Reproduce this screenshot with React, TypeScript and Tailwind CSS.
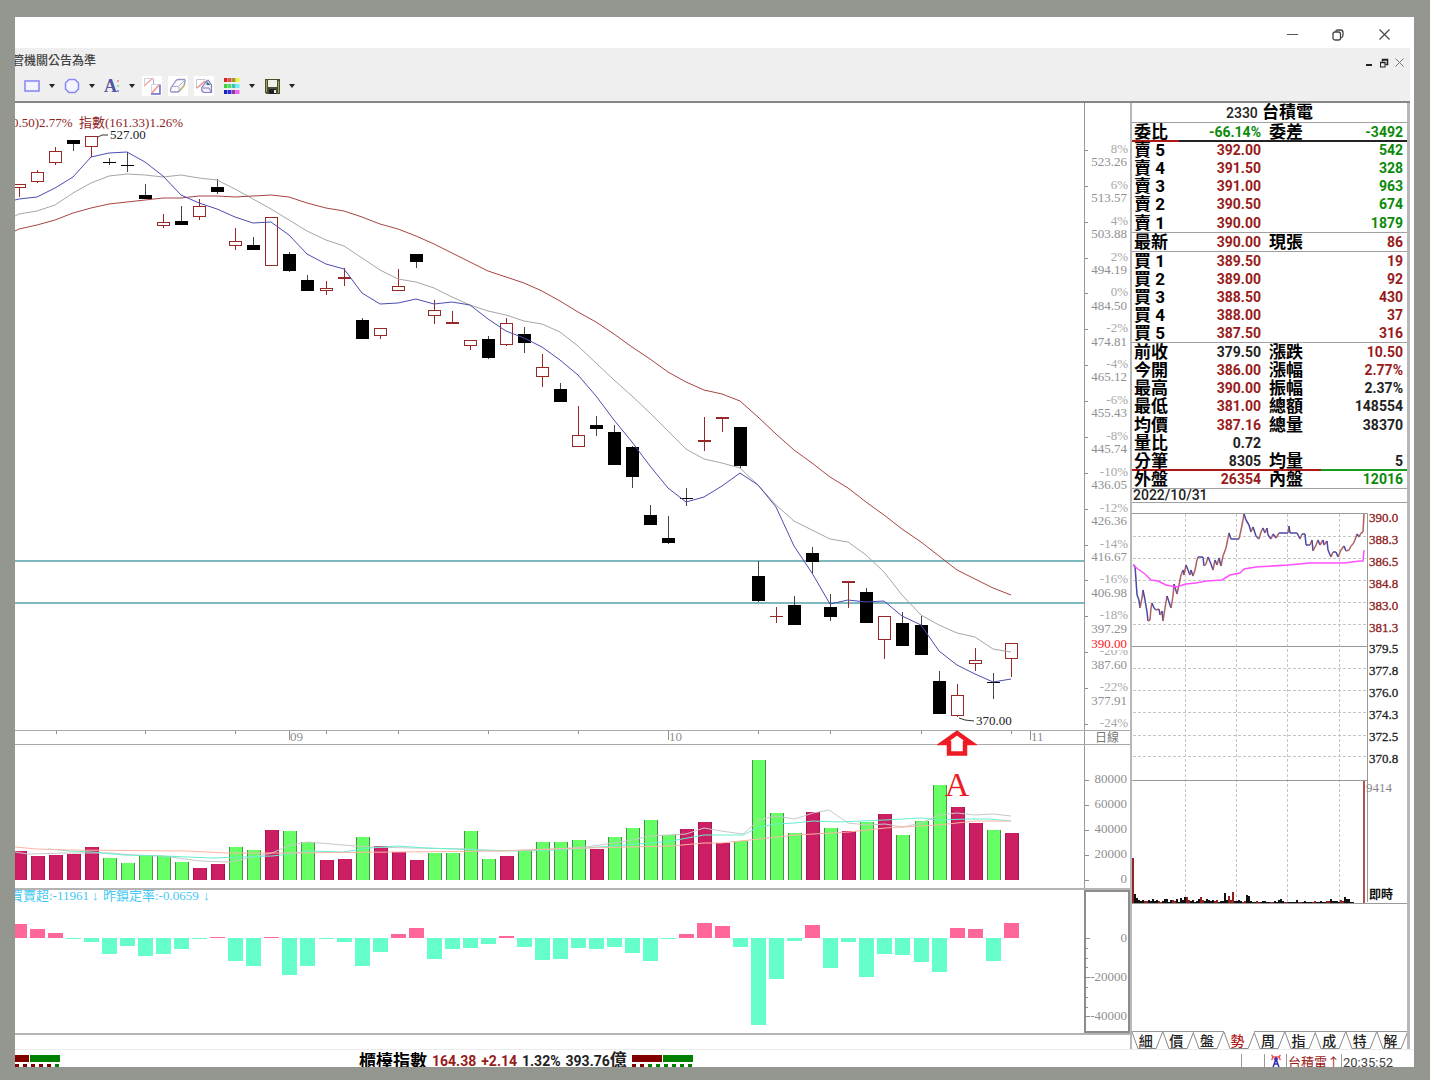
import React from 'react'

type Candle = ['r' | 'k', number, number, number, number]

// [colour, high, body top, body bottom, low]
const candles: Candle[] = [
  ['r', 184, 184, 187, 197],
  ['r', 170, 172, 181, 183],
  ['r', 147, 151, 162, 165],
  ['k', 140, 140, 143, 151],
  ['r', 136, 136, 146, 157],
  ['k', 158, 162, 162, 165],
  ['k', 152, 165, 165, 172],
  ['k', 184, 195, 198, 198],
  ['r', 214, 222, 225, 228],
  ['k', 206, 221, 224, 224],
  ['r', 199, 206, 216, 220],
  ['k', 179, 187, 191, 194],
  ['r', 228, 241, 245, 250],
  ['k', 237, 245, 249, 249],
  ['r', 217, 217, 265, 265],
  ['k', 252, 254, 270, 272],
  ['k', 275, 280, 290, 290],
  ['r', 281, 288, 290, 295],
  ['r', 268, 277, 278, 286],
  ['k', 318, 320, 338, 339],
  ['r', 328, 328, 335, 339],
  ['r', 269, 286, 290, 290],
  ['k', 254, 254, 261, 268],
  ['r', 300, 310, 315, 324],
  ['r', 311, 322, 323, 323],
  ['r', 340, 340, 345, 350],
  ['k', 336, 339, 357, 359],
  ['r', 318, 323, 344, 346],
  ['k', 327, 334, 342, 353],
  ['r', 354, 367, 376, 387],
  ['k', 383, 389, 401, 401],
  ['r', 406, 435, 446, 446],
  ['k', 416, 425, 428, 436],
  ['k', 425, 432, 464, 465],
  ['k', 446, 447, 476, 488],
  ['k', 505, 515, 524, 524],
  ['k', 516, 538, 542, 544],
  ['k', 488, 498, 498, 506],
  ['r', 417, 440, 441, 451],
  ['r', 417, 417, 418, 432],
  ['k', 427, 427, 465, 468],
  ['k', 561, 576, 600, 602],
  ['r', 607, 616, 616, 623],
  ['k', 596, 605, 624, 624],
  ['k', 547, 553, 561, 573],
  ['k', 594, 607, 616, 621],
  ['r', 581, 581, 582, 608],
  ['k', 588, 592, 622, 622],
  ['r', 616, 616, 639, 659],
  ['k', 612, 623, 645, 645],
  ['k', 616, 625, 654, 654],
  ['k', 671, 681, 713, 713],
  ['r', 684, 695, 715, 717],
  ['r', 648, 660, 663, 671],
  ['k', 673, 682, 682, 699],
  ['r', 643, 643, 658, 677],
]

const ma5 = [
  199, 197, 188, 177, 157, 153, 152, 162, 176, 195, 203, 209, 217, 223, 222, 235, 254, 264, 269,
  293, 304, 303, 299, 304, 302, 305, 319, 331, 338, 347, 360, 375, 396, 420, 442, 466, 488, 502,
  497, 486, 473, 485, 507, 546, 573, 604, 600, 602, 601, 616, 625, 651, 665, 674, 682, 679,
]
const ma10 = [
  214, 211, 205, 193, 183, 176, 174, 175, 177, 175, 178, 180, 189, 199, 209, 220, 231, 240, 246,
  258, 270, 279, 282, 288, 297, 305, 311, 315, 321, 324, 332, 346, 363, 380, 396, 413, 431, 449,
  459, 463, 468, 485, 505, 521, 530, 539, 542, 555, 572, 595, 615, 625, 633, 637, 649, 652,
]
const ma20 = [
  229, 225, 220, 213, 208, 204, 202, 200, 198, 198, 196, 196, 197, 196, 195, 197, 203, 208, 211,
  217, 224, 229, 236, 244, 253, 262, 271, 277, 283, 291, 301, 312, 322, 334, 347, 359, 372, 382,
  390, 394, 401, 417, 434, 450, 463, 477, 488, 502, 515, 529, 542, 556, 570, 579, 588, 595,
]

const volumes =
  'r851 r856 r855 r854 r847 g858 g863 g855 g856 g862 r868 r864 g847 g850 r830 g831 g842 r860 r859 g837 r846 r852 r860 g853 g853 g831 g859 r856 g851 g842 g842 g840 r849 g837 g828 g820 g835 r829 r822 r843 g841 g760 g813 g833 r812 g828 r831 g822 r814 g835 g821 g785 r807 r823 g830 r833'
    .split(' ')
    .map((v) => ({ color: v[0] === 'r' ? '#cc1f63' : '#66ff66', top: +v.slice(1) }))

// net buy / sell, in pixels from the zero line
const flows = [
  14, 9, 5, -1, -4, -16, -8, -18, -16, -11, -1, 1, -23, -28, 1, -37, -28, -1, -4, -28, -14, 4, 10,
  -21, -11, -10, -6, 2, -9, -22, -21, -10, -11, -9, -15, -23, -1, 4, 15, 12, -9, -87, -41, -3, 13,
  -30, -4, -39, -16, -17, -24, -34, 10, 9, -23, 15,
]

const volumeLines = [
  {
    color: '#c8c8c8',
    points:
      '15,852 28,854 67,853 110,853 133,855 163,856 200,861 230,862 253,857 272,853 290,845 308,842 343,845 370,847 413,848 467,849 500,851 554,849 586,847 607,844 632,840 650,836 686,834 704,828 721,831 743,834 759,820 776,816 795,819 813,813 829,810 848,823 867,825 885,824 903,827 921,823 939,815 957,813 975,815 993,814 1011,816',
  },
  {
    color: '#66f0d0',
    points:
      '48,849 60,850 70,851 93,852 123,855 163,856 213,858 240,857 272,856 290,854 308,851 343,852 370,848 397,846 427,848 480,850 518,851 554,850 586,848 625,845 650,843 671,841 704,835 743,835 759,827 776,824 795,823 813,821 839,822 885,820 921,818 939,820 968,819 989,819 1011,821',
  },
  {
    color: '#ffb4a4',
    points:
      '15,847 37,849 67,850 187,851 227,853 283,853 397,852 500,851 554,849 586,848 671,846 704,843 721,843 750,840 795,835 849,832 885,828 939,825 975,821 1011,821',
  },
]

const intraday = [
  [1133, 565], [1135, 566], [1136, 580], [1137, 595], [1139, 600], [1140, 608], [1142, 598],
  [1143, 590], [1145, 600], [1147, 612], [1148, 621], [1150, 620], [1151, 608], [1152, 603],
  [1154, 608], [1156, 610], [1159, 609], [1160, 615], [1162, 611], [1163, 621], [1165, 608],
  [1167, 596], [1169, 602], [1171, 608], [1173, 596], [1174, 584], [1177, 594], [1179, 585],
  [1181, 575], [1183, 570], [1184, 575], [1186, 565], [1188, 570], [1190, 575], [1191, 570],
  [1193, 576], [1195, 570], [1197, 560], [1198, 557], [1203, 557], [1204, 566], [1206, 564],
  [1208, 557], [1211, 564], [1213, 570], [1215, 560], [1217, 565], [1219, 558], [1221, 566],
  [1223, 556], [1226, 548], [1228, 538], [1229, 533], [1231, 539], [1239, 539], [1241, 530],
  [1243, 520], [1244, 514], [1246, 520], [1249, 525], [1251, 532], [1253, 527], [1256, 536],
  [1259, 539], [1261, 532], [1263, 528], [1265, 533], [1267, 528], [1268, 535], [1271, 539],
  [1273, 534], [1276, 538], [1279, 533], [1288, 533], [1289, 526], [1290, 533], [1297, 533],
  [1300, 539], [1302, 534], [1305, 534], [1306, 545], [1310, 545], [1312, 540], [1313, 551],
  [1316, 545], [1318, 540], [1320, 545], [1323, 540], [1324, 545], [1327, 541], [1328, 550],
  [1331, 557], [1333, 552], [1336, 552], [1338, 557], [1341, 550], [1344, 546], [1346, 551],
  [1349, 550], [1351, 546], [1353, 544], [1355, 540], [1357, 534], [1359, 537], [1361, 533],
  [1363, 532], [1364, 514],
]
const intradayAvg =
  '1133,565 1138,569 1145,574 1151,580 1158,581 1166,585 1176,587 1186,584 1196,583 1206,581 1222,580 1230,575 1240,573 1244,569 1256,567 1288,565 1310,563 1344,563 1360,561 1363,561 1364,550'
const ticks =
  '9 5 3 2 3 2 2 3 2 4 2 3 2 1 2 4 4 1 3 3 2 4 1 5 3 6 6 3 2 3 1 2 4 6 3 2 4 3 2 3 2 3 1 2 2 10 3 7 3 11 2 2 3 2 1 2 8 7 2 1 1 2 1 1 2 2 1 1 1 1 2 1 3 4 2 1 1 1 1 1 1 3 1 1 1 2 1 1 1 1 2 1 1 2 1 1 2 2 4 2 2 2 1 3 2 6 4 4 1 1'
    .split(' ')
    .map(Number)

const rightLabels = ['390.0', '388.3', '386.5', '384.8', '383.0', '381.3', '379.5', '377.8', '376.0', '374.3', '372.5', '370.8']
const priceLabels = ['523.26', '513.57', '503.88', '494.19', '484.50', '474.81', '465.12', '455.43', '445.74', '436.05', '426.36', '416.67', '406.98', '397.29', '387.60', '377.91']

const RED = 'text-[#981b1b]'
const GREEN = 'text-[#0b8a0b]'
const BLACK = 'text-[#222222]'

interface IRow {
  label: string
  value: string
  color: string
  label2?: string
  value2: string
  color2: string
  rule?: boolean
  split?: number
}
const rows: IRow[] = [
  { label: '委比', value: '-66.14%', color: GREEN, label2: '委差', value2: '-3492', color2: GREEN, split: 17 },
  { label: '賣 5', value: '392.00', color: RED, value2: '542', color2: GREEN },
  { label: '賣 4', value: '391.50', color: RED, value2: '328', color2: GREEN },
  { label: '賣 3', value: '391.00', color: RED, value2: '963', color2: GREEN },
  { label: '賣 2', value: '390.50', color: RED, value2: '674', color2: GREEN },
  { label: '賣 1', value: '390.00', color: RED, value2: '1879', color2: GREEN, rule: true },
  { label: '最新', value: '390.00', color: RED, label2: '現張', value2: '86', color2: RED, rule: true },
  { label: '買 1', value: '389.50', color: RED, value2: '19', color2: RED },
  { label: '買 2', value: '389.00', color: RED, value2: '92', color2: RED },
  { label: '買 3', value: '388.50', color: RED, value2: '430', color2: RED },
  { label: '買 4', value: '388.00', color: RED, value2: '37', color2: RED },
  { label: '買 5', value: '387.50', color: RED, value2: '316', color2: RED, rule: true },
  { label: '前收', value: '379.50', color: BLACK, label2: '漲跌', value2: '10.50', color2: RED },
  { label: '今開', value: '386.00', color: RED, label2: '漲幅', value2: '2.77%', color2: RED },
  { label: '最高', value: '390.00', color: RED, label2: '振幅', value2: '2.37%', color2: BLACK },
  { label: '最低', value: '381.00', color: RED, label2: '總額', value2: '148554', color2: BLACK },
  { label: '均價', value: '387.16', color: RED, label2: '總量', value2: '38370', color2: BLACK },
  { label: '量比', value: '0.72', color: BLACK, value2: '', color2: BLACK },
  { label: '分筆', value: '8305', color: BLACK, label2: '均量', value2: '5', color2: BLACK, split: 68.7 },
  { label: '外盤', value: '26354', color: RED, label2: '內盤', value2: '12016', color2: GREEN, rule: true },
]

const cx = (i: number) => Math.round(19 + 18.03 * i)
const toPoints = (ys: number[]) => ys.map((y, i) => `${cx(i)},${y}`).join(' ')

function Caret({ label }: { label: string }) {
  return (
    <button aria-label={label} className="flex h-5 w-5 items-center justify-center">
      <svg width="6" height="4" viewBox="0 0 6 4">
        <path d="M0 0h6L3 4z" fill="#222" />
      </svg>
    </button>
  )
}

function Toolbar() {
  const btn = 'flex h-5 w-5 items-center justify-center'
  return (
    <div className="flex h-[30px] items-center pl-[7px]">
      <button aria-label="矩形" className={btn}>
        <svg width="16" height="12">
          <rect x="1" y="1" width="14" height="10" fill="#f4f4ff" stroke="#8484f4" strokeWidth="1.500" />
        </svg>
      </button>
      <Caret label="矩形選項" />
      <button aria-label="圓形" className={btn}>
        <svg width="16" height="16">
          <path d="M5 1.500h6L14.500 5v6L11 14.500H5L1.500 11V5z" fill="#f4f4ff" stroke="#8888f4" strokeWidth="1.500" strokeLinejoin="round" />
        </svg>
      </button>
      <Caret label="圓形選項" />
      <button aria-label="文字" className={btn}>
        <span className="font-['Liberation_Serif',serif] text-lg leading-none font-bold text-[#5058a0]">A</span>
        <svg width="3" height="14">
          <rect y="1" width="2" height="2" fill="#e8a0a0" />
          <rect y="6" width="2" height="2" fill="#a0d8a0" />
          <rect y="11" width="2" height="2" fill="#9090e0" />
        </svg>
      </button>
      <Caret label="文字選項" />
      <div className="flex gap-1.5">
        <button aria-label="複製線" className={`${btn} bg-white`}>
          <svg width="20" height="20" fill="none">
            <path d="M2.500 9V2.500H10" stroke="#d0d0dc" />
            <path d="M2 10l9-8" stroke="#f4a8a8" strokeWidth="1.500" />
            <path d="M9.500 8.500h8v9h-8z" fill="#fff" stroke="#d8d0e4" />
            <path d="M18 8.500v9.500H9" stroke="#6c6cc8" strokeWidth="1.500" />
            <path d="M10 17l7-8" stroke="#f09090" strokeWidth="1.500" />
            <path d="M11.500 3v5" stroke="#a8a8dc" />
          </svg>
        </button>
        <button aria-label="橡皮擦" className={`${btn} bg-white`}>
          <svg width="20" height="20" fill="none">
            <path d="M8 4.500q1-1 3-1h5q1.500 0 1 2l-1 4-4.500 5.500q-1 1-3 1H4q-1.500 0-1.500-1.500t1-3.500z" fill="#fbfbff" stroke="#9494c4" strokeWidth="1.300" strokeLinejoin="round" />
            <path d="M4 10.500h5.500q1.500 0 1.500 1.500v3.500M10.500 10.500l6-6" stroke="#a8a8d0" />
            <path d="M12 14.500l5-6" stroke="#c8c060" strokeWidth="1.500" />
          </svg>
        </button>
        <button aria-label="全部清除" className={`${btn} bg-white`}>
          <svg width="20" height="20" fill="none">
            <path d="M2.500 12.500v-9h9" stroke="#c4c4d4" />
            <path d="M3 12l8-7" stroke="#f09090" strokeWidth="1.500" />
            <path d="M8 11.500l4-6 2-1.500 3.500 5v7.500h-8l-2-2z" fill="#eeeefc" stroke="#8080b8" strokeWidth="1.200" />
            <path d="M12.500 5l4 4h-4z" fill="#407080" />
            <path d="M9 12h6l2 4" stroke="#8080b8" />
          </svg>
        </button>
      </div>
      <button aria-label="顏色" className={`${btn} ml-2`}>
        <svg width="16" height="17">
          {['#e02020 #e05050 #90a020 #f0f040', '#40d040 #50e070 #40c0c0 #70f0f0', '#2020c0 #3030e0 #a030a0 #f060f0'].map((row, r) =>
            row.split(' ').map((c, i) => <rect key={c} x={i * 4} y={r * 6} width="3.500" height="4" fill={c} />),
          )}
        </svg>
      </button>
      <Caret label="顏色選項" />
      <button aria-label="儲存" className={btn}>
        <svg width="15" height="15">
          <path d="M0 0h15v15H1.500L0 13.500z" fill="#4c4c30" />
          <rect x="3" y="1" width="9" height="7" fill="#f0f0ea" />
          <rect x="1" y="1" width="1" height="12" fill="#a0a060" />
          <rect x="13" y="2" width="1" height="12" fill="#a0a060" />
          <rect x="4" y="10" width="7" height="5" fill="#222" />
          <rect x="9" y="11" width="2" height="3" fill="#e8e8e8" />
        </svg>
      </button>
      <Caret label="儲存選項" />
    </div>
  )
}

function PricePanel() {
  return (
    <div className="flex h-[628px] border-b border-[#a8a8a8]">
      <svg className="h-full min-w-0 flex-1 font-['Liberation_Serif','Noto_Sans_CJK_TC',serif] text-[13px]">
        <g transform="translate(-15 -103)">
          {[560, 602].map((y) => (
            <rect key={y} x="15" y={y} width="100%" height="2" fill="#7fb8bf" />
          ))}
          {candles.map(([c, high, top, bottom, low], i) => {
            const color = c === 'r' ? '#982828' : '#000'
            const x = cx(i)
            return (
              <g key={i} shapeRendering="crispEdges">
                <rect x={x} y={high} width="1" height={low - high} fill={c === 'r' ? color : '#444'} />
                {c === 'r' && bottom - top > 1 ? (
                  <rect x={x - 5.5} y={top + 0.5} width="12" height={bottom - top} fill="#fff" stroke={color} />
                ) : (
                  <rect x={x - 6} y={top} width="13" height={bottom - top + 1} fill={color} />
                )}
              </g>
            )
          })}
          <g fill="none" strokeWidth="1">
            <polyline points={`15,216 ${toPoints(ma10)}`} stroke="#a6a6a6" />
            <polyline points={`15,231 ${toPoints(ma20)}`} stroke="#a84444" />
            <polyline points={`15,200 ${toPoints(ma5)}`} stroke="#4c4cb0" />
            <path d="M98 137l4-2h6M959 718l6 2 9 1" stroke="#333" />
          </g>
          <text x="12" y="127" fill="#8e2424">0.50)2.77%</text>
          <text x="79" y="127" fill="#8e2424">指數(161.33)1.26%</text>
          <text x="110" y="139" fill="#222">527.00</text>
          <text x="976" y="725" fill="#222">370.00</text>
        </g>
      </svg>
      <svg className="h-full w-[46px] border-l border-[#999] font-['Liberation_Serif',serif] text-[13px]" textAnchor="end" fill="#8f8f8f">
        <g transform="translate(-1086 -103)">
          {Array.from({ length: 17 }, (_, i) => {
            const y = Math.round(150 + 35.87 * i)
            return (
              <g key={i}>
                <rect x="1086" y={y} width="3" height="1" />
                <text x="1129" y={y + 3} fill="#a8a8a8">{`${8 - 2 * i}%`}</text>
              </g>
            )
          })}
          {priceLabels.map((p, i) => (
            <text key={p} x="1128" y={Math.round(166 + 35.9 * i)}>{p}</text>
          ))}
          <rect x="1089" y="638" width="40" height="12" fill="#fff" />
          <text x="1128" y="648" fill="#ff2020">390.00</text>
        </g>
      </svg>
    </div>
  )
}

function TimeAxis() {
  return (
    <div className="flex h-[14px] border-b border-[#a8a8a8]">
      <svg className="h-full min-w-0 flex-1 overflow-visible font-['Liberation_Serif',serif] text-[13px]" fill="#8f8f8f">
        {[41, 130, 220, 311, 383, 473, 563, 743, 815, 906, 996].map((x) => (
          <rect key={x} x={x} width="1" height="3" />
        ))}
        {[['09', 274], ['10', 653], ['11', 1015]].map(([t, x]) => (
          <g key={t}>
            <rect x={x} width="1" height="9" />
            <text x={+x + 1} y="10">{t}</text>
          </g>
        ))}
      </svg>
      <div className="w-[46px] border-l border-[#999] pl-2.5 font-['Noto_Sans_CJK_TC',sans-serif] text-xs leading-[11px] text-[#777]">
        日線
      </div>
    </div>
  )
}

function VolumePanel() {
  return (
    <div className="flex h-[145px] border-b-2 border-[#b4b4b4]">
      <svg className="h-full min-w-0 flex-1">
        <g transform="translate(-15 -745)">
          {volumes.map((v, i) => (
            <g key={i} shapeRendering="crispEdges">
              <rect x={cx(i) - 6} y={v.top} width="14" height={880 - v.top} fill={v.color === '#66ff66' ? '#4f8a4f' : '#a3164e'} />
              <rect x={cx(i) - 5} y={v.top} width="12" height={880 - v.top} fill={v.color} />
            </g>
          ))}
          {volumeLines.map((l) => (
            <polyline key={l.color} points={l.points} fill="none" stroke={l.color} />
          ))}
        </g>
      </svg>
      <svg className="h-full w-[46px] border-l border-[#999] font-['Liberation_Serif',serif] text-[13px]" textAnchor="end" fill="#8f8f8f">
        {[80000, 60000, 40000, 20000, 0].map((n, i) => (
          <g key={n}>
            <rect y={35 + 25 * i} width="4" height="1" />
            <text x="42" y={38 + 25 * i}>{n}</text>
          </g>
        ))}
      </svg>
    </div>
  )
}

function FlowPanel() {
  return (
    <div className="flex h-[145px] border-b-2 border-[#b4b4b4]">
      <svg className="h-full min-w-0 flex-1 overflow-visible font-['Liberation_Serif','Noto_Sans_CJK_TC',serif] text-[13px]" fill="#45c8f5">
        <text x="-5" y="10">買賣超:-11961</text>
        <text x="77" y="10">↓</text>
        <text x="88" y="10">昨鎖定率:-0.0659</text>
        <text x="188" y="10">↓</text>
        {flows.map((f, i) => (
          <rect
            key={i}
            x={cx(i) - 22}
            y={f > 0 ? 48 - f : 48}
            width="15"
            height={Math.abs(f)}
            fill={f > 0 ? '#ff6699' : '#66ffcc'}
            shapeRendering="crispEdges"
          />
        ))}
      </svg>
      <svg className="h-full w-[46px] border-2 border-[#8c8c8c] font-['Liberation_Serif',serif] text-[13px]" textAnchor="end" fill="#8f8f8f">
        {[0, 1, 2, 3, 4, 5, 6, 7, 8].map((i) => (
          <rect key={i} y={Math.round(46 + 9.8 * i)} width={i % 4 === 0 ? 4 : 2} height="1" />
        ))}
        <text x="41" y="50">0</text>
        <text x="41" y="89">-20000</text>
        <text x="41" y="128">-40000</text>
      </svg>
    </div>
  )
}

function QuoteTable() {
  return (
    <table className="h-[366px] w-full table-fixed border-collapse font-['Roboto','Noto_Sans_CJK_TC',sans-serif] text-sm leading-[18px] font-bold">
      <tbody>
        {rows.map((r) => (
          <tr key={r.label} className={`relative ${r.rule ? 'border-b border-[#a0a0a0]' : ''}`}>
            <th className="w-[51px] p-0 pl-0.5 text-left text-[17px] leading-4 font-bold whitespace-pre text-black">
              {r.label}
            </th>
            <td className={`w-[78px] p-0 text-right ${r.color}`}>{r.value}</td>
            <th className="w-[57px] p-0 pl-2 text-left text-[17px] leading-4 font-bold text-black">{r.label2}</th>
            <td className={`p-0 pr-1 text-right ${r.color2}`}>
              {r.value2}
              {r.split && (
                <div className="absolute inset-x-0 -bottom-px flex h-0.5">
                  <div className="bg-[#b01818]" style={{ width: `${r.split}%` }} />
                  <div className={r.split < 50 ? 'flex-1 bg-[#222]' : 'flex-1 bg-[#1a9a1a]'} />
                </div>
              )}
            </td>
          </tr>
        ))}
      </tbody>
    </table>
  )
}

function Intraday() {
  return (
    <svg className="h-[401px] w-full border-b border-[#999] font-['Liberation_Serif','Noto_Sans_CJK_TC',serif] text-[13px]">
      <g transform="translate(-1132 -503)">
        <g stroke="#c4c4c4" strokeDasharray="3 2">
          {[536, 558, 580, 602, 624, 668, 690, 712, 735, 756].map((y) => (
            <path key={y} d={`M1133 ${y}.5H1367`} />
          ))}
          {[1185, 1236, 1287, 1339].map((x) => (
            <path key={x} d={`M${x}.5 514V902`} />
          ))}
        </g>
        <path d="M1132 513.500H1367.500V902M1132 646.500H1367M1132 780.500H1367" fill="none" stroke="#999" />
        {intraday.slice(1).map(([x, y], i) => {
          const [px, py] = intraday[i]
          return (
            <line key={i} x1={px} y1={py} x2={x} y2={y} stroke={y < py ? '#b06060' : '#4848a8'} strokeWidth="1.500" />
          )
        })}
        <polyline points={intradayAvg} fill="none" stroke="#ff50ff" strokeWidth="1.500" />
        <rect x="1132" y="858" width="2" height="45" fill="#902828" />
        <rect x="1363" y="781" width="2" height="122" fill="#b05050" />
        {ticks.map((t, i) => (
          <rect key={i} x={1134 + i * 2} y={903 - t} width="2" height={t} fill={i % 7 > 4 || t > 10 ? '#902020' : '#111'} />
        ))}
        {rightLabels.map((l, i) => (
          <text key={l} x="1369" y={Math.round(522 + 21.9 * i)} fill={i < 6 ? '#8e2020' : '#222'} stroke={i < 6 ? '#8e2020' : '#222'} strokeWidth="0.300">
            {l}
          </text>
        ))}
        <text x="1366" y="792" fill="#888">9414</text>
        <text x="1369" y="899" fill="#111" className="text-xs font-bold">即時</text>
      </g>
    </svg>
  )
}

function Tabs() {
  return (
    <div className="flex h-[18px] font-['Noto_Sans_CJK_TC',sans-serif] text-sm leading-[15px] text-[#222]">
      {['細', '價', '盤', '勢', '周', '指', '成', '特', '解'].map((t) => (
        <button
          key={t}
          className={`relative flex-1 border-t pr-[3px] font-medium ${t === '勢' ? 'border-transparent text-[#b01c1c]' : 'border-[#999]'}`}
        >
          <svg className="absolute inset-0 h-full w-full" viewBox="0 0 31 17" preserveAspectRatio="none" fill="none">
            <path d="M0 0l6 16.500h18.500L31 0" stroke="#888" />
          </svg>
          {t}
        </button>
      ))}
    </div>
  )
}

function Meter({ red, total }: { red: number; total: number }) {
  return (
    <svg width="61" height="13" className="shrink-0">
      <rect width="30" height="7" fill="#800000" />
      <rect x="31" width="30" height="7" fill="#008000" />
      {Array.from({ length: total }, (_, i) => (
        <rect key={i} x={i * 8} y="9" width="4" height="4" fill={i < red ? '#800000' : '#008000'} />
      ))}
    </svg>
  )
}

function StatusBar() {
  return (
    <div className="flex h-[18px] overflow-hidden border-t border-[#ececec] font-['Roboto','Noto_Sans_CJK_TC',sans-serif] text-sm leading-[22px] font-bold">
      <div className="-ml-4 w-[360px] shrink-0 pt-[5px]">
        <Meter red={7} total={8} />
      </div>
      <div className="flex flex-1 gap-[5px] whitespace-nowrap text-[#222]">
        <span className="text-[17px] text-black">櫃檯指數</span>
        <span className={RED}>164.38</span>
        <span className={RED}>+2.14</span>
        <span>1.32%</span>
        <span>
          393.76<span className="text-[17px] leading-none">億</span>
        </span>
        <div className="pt-[5px]">
          <Meter red={2} total={8} />
        </div>
      </div>
      <div className="flex pt-1 leading-[18px] font-normal">
        <div className="w-[23px] border-l border-[#999]" />
        <div className="flex w-[22px] justify-center border-l border-[#999]">
          <svg width="12" height="14" fill="none">
            <path d="M1.500 1q2.500 2 0 5M10.500 1q-2.500 2 0 5M3 3h6" stroke="#f05050" strokeWidth="1.500" />
            <path d="M6 3v5M4 5h4M5.500 6L3 13.500M6.500 6L9 13.500M4 10h4" stroke="#3030b0" strokeWidth="1.500" />
          </svg>
        </div>
        <div className={`w-[55px] border-l border-[#999] pl-px text-[13px] ${RED}`}>台積電↑</div>
        <div className="w-[73px] border-l border-[#999] pl-px text-[13px] text-[#444]">20:35:52</div>
      </div>
    </div>
  )
}

function App() {
  return (
    <div className="flex min-h-screen flex-col bg-[#949690] pt-[17px] pr-4 pb-[13px] pl-[15px]">
      <div className="flex flex-1 flex-col overflow-hidden bg-white">
        <div className="flex h-[31px] items-center justify-end pt-1 pr-[7px]">
          <button aria-label="最小化" className="flex w-[46px] justify-center">
            <svg width="11" height="11"><path d="M0 5.500h11" stroke="#555" /></svg>
          </button>
          <button aria-label="還原" className="flex w-[46px] justify-center">
            <svg width="12" height="12" fill="none" stroke="#444" strokeWidth="1.300">
              <rect x="1" y="3" width="7.500" height="8" rx="2" />
              <path d="M3.500 2.500C4 1 5 1 6 1h2.500C10.500 1 11 2 11 3.500V6c0 1.500-.5 2.500-2 3" />
            </svg>
          </button>
          <button aria-label="關閉" className="flex w-[46px] justify-center">
            <svg width="11" height="11"><path d="M.5.5l10 10M10.500.5l-10 10" stroke="#444" strokeWidth="1.200" /></svg>
          </button>
        </div>
        <div className="mr-1 h-[53px] bg-[#efefef]">
          <div className="flex h-[23px] items-center justify-between pr-1.5">
            <span className="-ml-[3px] font-['Noto_Sans_CJK_TC',sans-serif] text-xs font-medium text-[#444]">管機關公告為準</span>
            <div className="flex items-center gap-1.5 pt-1.5">
              <button aria-label="最小化子視窗">
                <svg width="8" height="9"><rect x="1" y="6" width="6" height="2" fill="#222" /></svg>
              </button>
              <button aria-label="還原子視窗">
                <svg width="10" height="10" fill="none" stroke="#222">
                  <path d="M3.500 3.500v-2h5v5h-2M3.500 2h5" strokeWidth="1.500" />
                  <rect x="1.500" y="4.500" width="4.500" height="4.500" fill="#eee" />
                  <path d="M1 4.500h5.500" strokeWidth="1.500" />
                </svg>
              </button>
              <button aria-label="關閉子視窗">
                <svg width="9" height="9"><path d="M.5.5l8 8M8.500.5l-8 8" stroke="#777" /></svg>
              </button>
            </div>
          </div>
          <Toolbar />
        </div>
        <div className="mr-1 flex border-t-2 border-[#868686]">
          <main className="flex min-w-0 flex-1 flex-col">
            <PricePanel />
            <TimeAxis />
            <div className="relative">
              {/* marker A under the low */}
              <div className="absolute -top-4 left-[922px] flex w-10 flex-col items-center">
                <svg width="40" height="28" fill="#fff" stroke="#ed1c24" strokeWidth="4.500">
                  <path d="M20 4L6 14h6v10.500h16V14h6z" />
                </svg>
                <span className="mt-3 font-['Liberation_Serif',serif] text-[34px] leading-8 text-[#ed1c24]">A</span>
              </div>
              <VolumePanel />
            </div>
            <FlowPanel />
          </main>
          <aside className="w-[280px] border-r-[3px] border-l-2 border-[#b8b8b8]">
            <h1 className="h-5 border-b border-[#a0a0a0] text-center font-['Roboto','Noto_Sans_CJK_TC',sans-serif] text-[17px] leading-[19px] font-bold text-black">
              <span className={`text-sm font-medium ${BLACK}`}>2330</span> 台積電
            </h1>
            <QuoteTable />
            <p className="h-[14px] border-b border-[#a0a0a0] pl-px font-['Roboto',sans-serif] text-sm leading-[13px] font-medium text-[#222]">
              2022/10/31
            </p>
            <Intraday />
            <div className="h-[127px]" />
            <Tabs />
          </aside>
        </div>
        <StatusBar />
      </div>
    </div>
  )
}

export default App
